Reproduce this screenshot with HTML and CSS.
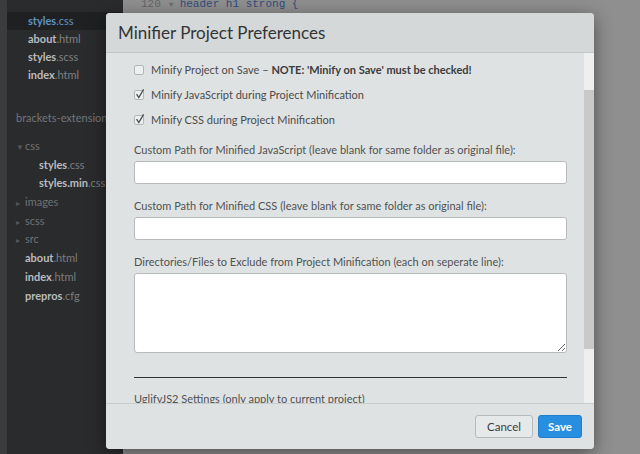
FILE: index.html
```html
<!DOCTYPE html>
<html lang="en">
<head>
<meta charset="utf-8">
<title>Minifier Project Preferences</title>
<link rel="stylesheet" href="styles.css">
</head>
<body>
<div class="app">
  <div class="strip"></div>
  <aside class="sidebar">
    <ul class="working">
      <li class="sel"><b>styles</b>.css</li>
      <li><b>about</b>.html</li>
      <li><b>styles</b>.scss</li>
      <li><b>index</b>.html</li>
    </ul>
    <div class="proj">brackets-extensions</div>
    <ul class="tree">
      <li class="dir"><span class="tri">▼</span>css</li>
      <li class="child"><b>styles</b>.css</li>
      <li class="child"><b>styles.min</b>.css</li>
      <li class="dir"><span class="tri">▸</span>images</li>
      <li class="dir"><span class="tri">▸</span>scss</li>
      <li class="dir"><span class="tri">▸</span>src</li>
      <li class="file"><b>about</b>.html</li>
      <li class="file"><b>index</b>.html</li>
      <li class="file"><b>prepros</b>.cfg</li>
    </ul>
  </aside>
  <main class="editor">
    <div class="code-line"><span class="ln">120</span><span class="fold">▼</span><span class="code">header h1 strong {</span></div>
  </main>

  <div class="modal">
    <div class="modal-header">
      <h1 class="modal-title">Minifier Project Preferences</h1>
    </div>
    <div class="modal-body">
      <div class="content">
        <div class="checks">
          <label class="check"><span class="box"></span><span>Minify Project on Save – <strong>NOTE: 'Minify on Save' must be checked!</strong></span></label>
          <label class="check"><span class="box on"><svg viewBox="0 0 12 12" width="12" height="12"><path d="M2.6 6.2 L4.8 9.6 L9.6 1.4" fill="none" stroke="#4a4a4a" stroke-width="1.3"/></svg></span><span>Minify JavaScript during Project Minification</span></label>
          <label class="check"><span class="box on"><svg viewBox="0 0 12 12" width="12" height="12"><path d="M2.6 6.2 L4.8 9.6 L9.6 1.4" fill="none" stroke="#4a4a4a" stroke-width="1.3"/></svg></span><span>Minify CSS during Project Minification</span></label>
        </div>
        <div class="field first">
          <div class="field-label">Custom Path for Minified JavaScript (leave blank for same folder as original file):</div>
          <input class="text-input" type="text">
        </div>
        <div class="field">
          <div class="field-label">Custom Path for Minified CSS (leave blank for same folder as original file):</div>
          <input class="text-input" type="text">
        </div>
        <div class="field">
          <div class="field-label">Directories/Files to Exclude from Project Minification (each on seperate line):</div>
          <textarea class="text-area"></textarea>
        </div>
        <hr class="rule">
        <div class="section-title">UglifyJS2 Settings (only apply to current project)</div>
      </div>
      <div class="scrollbar"><div class="thumb"></div></div>
    </div>
    <div class="modal-footer">
      <button class="btn">Cancel</button>
      <button class="btn primary">Save</button>
    </div>
  </div>
</div>
</body>
</html>
```
FILE: styles.css
```css
* { box-sizing: border-box; }
html, body { margin: 0; padding: 0; }
body {
  width: 640px;
  height: 454px;
  overflow: hidden;
  font-family: Lato, "Liberation Sans", sans-serif;
  background: #8f8f8f;
}
.app {
  position: relative;
  display: flex;
  width: 640px;
  height: 454px;
}
.strip {
  width: 7px;
  background: #3a3c3e;
}
.sidebar {
  width: 116px;
  background: #2a2b2d;
  color: #7f8184;
  font-size: 11px;
  overflow: hidden;
  white-space: nowrap;
}
.sidebar .working,
.sidebar .tree { list-style: none; margin: 0; padding: 0; }
.sidebar b { color: #b9bbbe; font-weight: 700; }
.sidebar .working { padding-top: 12px; }
.working li {
  height: 18px;
  line-height: 18px;
  padding-left: 21px;
}
.working li.sel { background: #1f2022; color: #5f93c4; }
.working li.sel b { color: #5f93c4; }
.proj {
  margin-top: 25px;
  padding-left: 9px;
  line-height: 18px;
  color: #737578;
}
.sidebar .tree { padding-top: 10px; }
.tree li {
  height: 18.7px;
  line-height: 18.7px;
}
.tree .dir { padding-left: 9px; color: #6f7174; }
.tree .tri { display: inline-block; width: 9px; font-size: 8px; color: #55575a; }
.tree .child { padding-left: 32px; color: #7b7d80; }
.tree .file { padding-left: 18px; color: #7b7d80; }

.editor {
  flex: 1;
  background: #8f8f8f;
  overflow: hidden;
}
.code-line {
  margin-top: -3px;
  padding-left: 18px;
  font-family: "Liberation Mono", monospace;
  font-size: 11px;
  line-height: 15px;
  white-space: pre;
}
.ln { color: #646669; }
.fold { color: #6c6e71; font-size: 8px; padding: 0 6px 0 8px; }
.code { color: #2f4d7c; }

/* Modal */
.modal {
  position: absolute;
  left: 106px;
  top: 13px;
  width: 488px;
  height: 436px;
  border-radius: 4px;
  overflow: hidden;
  background: #dfe2e2;
  box-shadow: 0 4px 18px rgba(0, 0, 0, 0.45);
  display: flex;
  flex-direction: column;
  color: #4a4c4e;
}
.modal-header {
  height: 40px;
  background: #d5d8d8;
  border-bottom: 1px solid #c3c6c7;
  padding-left: 12px;
  display: flex;
  align-items: center;
}
.modal-title {
  margin: 0;
  font-size: 17px;
  font-weight: 400;
  color: #333536;
}
.modal-body {
  height: 350px;
  display: flex;
}
.content {
  flex: 1;
  overflow: hidden;
  padding: 4px 17px 0 28px;
  font-size: 11px;
}
.checks { display: flex; flex-direction: column; }
.check {
  height: 25px;
  display: flex;
  align-items: center;
  gap: 7px;
  color: #4a4c4e;
}
.check strong { color: #3a3c3e; font-weight: 700; }
.box {
  position: relative;
  width: 10px;
  height: 10px;
  border: 1px solid #b3b6b7;
  border-radius: 2px;
  background: #eef0f0;
  flex: none;
}
.box svg { position: absolute; left: -1px; top: -3px; }
.field { margin-top: 14px; }
.field.first { margin-top: 10px; }
.field-label {
  line-height: 16px;
  margin-bottom: 3px;
  color: #505254;
}
.text-input {
  display: block;
  width: 433px;
  height: 23px;
  margin: 0;
  border: 1px solid #b8bbbc;
  border-radius: 3px;
  background: #fff;
}
.text-area {
  display: block;
  width: 433px;
  height: 80px;
  margin: 0;
  border: 1px solid #b8bbbc;
  border-radius: 3px;
  background: #fff;
}
.rule {
  margin: 24px 0 0 0;
  width: 433px;
  border: 0;
  height: 1px;
  background: #2f3132;
}
.section-title {
  margin-top: 13px;
  line-height: 16px;
  color: #505254;
  white-space: nowrap;
}
.scrollbar {
  width: 10px;
  background: #efefef;
  padding-top: 37px;
}
.thumb {
  height: 259px;
  background: #c9c9c9;
}
.modal-footer {
  flex: 1;
  border-top: 1px solid #c9cccc;
  background: #dfe2e2;
  display: flex;
  justify-content: flex-end;
  align-items: center;
  gap: 5px;
  padding: 0 12px 1px 0;
}
.btn {
  height: 23px;
  padding: 0 11px;
  font-family: Lato, "Liberation Sans", sans-serif;
  font-size: 11.5px;
  border-radius: 3px;
  border: 1px solid #b5b9b9;
  background: #e6e9e9;
  color: #3a3c3e;
}
.btn.primary {
  padding: 0 9px;
  background: #288edf;
  border-color: #1d7fcd;
  color: #fff;
  font-weight: 700;
}
```
